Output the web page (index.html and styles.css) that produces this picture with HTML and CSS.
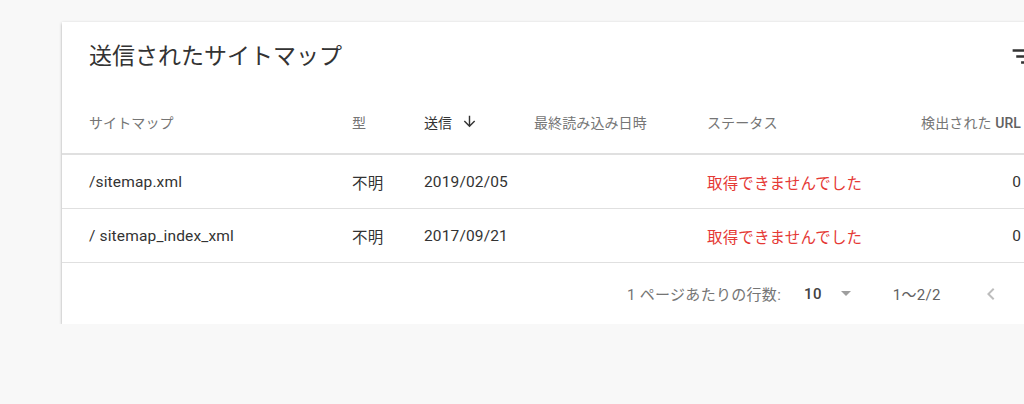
FILE: index.html
```html
<!DOCTYPE html>
<html lang="ja">

<head>
    <meta charset="UTF-8">
    <meta name="viewport" content="width=device-width, initial-scale=1.0">
    <title>送信されたサイトマップ</title>
    <link rel="stylesheet" href="styles.css">
</head>

<body>
    <div class="card">
        <div class="card-header">
            <h2 class="title">送信されたサイトマップ</h2>
            <svg class="filterIcon" viewBox="0 0 24 24"><path d="M10 18h4v-2h-4v2zM3 6v2h18V6H3zm3 7h12v-2H6v2z"/></svg>
        </div>

        <div class="row head">
            <div>サイトマップ</div>
            <div>型</div>
            <div class="sorted">送信
                <svg class="sortIcon" viewBox="0 0 24 24"><path d="M20 12l-1.41-1.41L13 16.17V4h-2v12.17l-5.58-5.59L4 12l8 8 8-8z"/></svg>
            </div>
            <div>最終読み込み日時</div>
            <div>ステータス</div>
            <div class="num">検出された <span class="latin">URL</span></div>
        </div>

        <div class="row">
            <div>/sitemap.xml</div>
            <div>不明</div>
            <div>2019/02/05</div>
            <div></div>
            <div class="error">取得できませんでした</div>
            <div class="num">0</div>
        </div>
        <div class="row">
            <div>/ sitemap_index_xml</div>
            <div>不明</div>
            <div>2017/09/21</div>
            <div></div>
            <div class="error">取得できませんでした</div>
            <div class="num">0</div>
        </div>

        <div class="pager">
            <span class="pageLabel">1 ページあたりの行数:</span>
            <span class="pageSize">10</span>
            <span class="dropArrow"></span>
            <span class="range">1〜2/2</span>
            <svg class="chevron" viewBox="0 0 24 24"><path d="M15.41 7.41L14 6l-6 6 6 6 1.41-1.41L10.83 12z"/></svg>
            <svg class="chevron" viewBox="0 0 24 24"><path d="M10 6L8.59 7.41 13.17 12l-4.58 4.59L10 18l6-6z"/></svg>
        </div>
    </div>
</body>

</html>
```

FILE: styles.css
```css
html {
    overflow: hidden;
}

body {
    font-family: Roboto, "Noto Sans CJK JP", sans-serif;
    margin: 0;
    padding: 22px 0 0 62px;
    background-color: #f8f8f8;
    color: #333;
}

.card {
    width: 1000px;
    background-color: white;
    box-shadow: 0 1px 3px rgba(0, 0, 0, 0.25), 0 2px 2px rgba(0, 0, 0, 0.1);
}

.card-header {
    height: 69px;
    display: flex;
    align-items: center;
    justify-content: space-between;
    padding: 0 24px 0 27px;
}

.title {
    margin: 0;
    font-size: 23px;
    font-weight: 400;
    line-height: 32px;
    color: #333;
}

.filterIcon {
    width: 29px;
    height: 29px;
    fill: #333;
}

.row {
    display: grid;
    grid-template-columns: 263px 72px 110px 173px 160px 1fr;
    align-items: center;
    height: 53px;
    padding: 0 41px 0 27px;
    border-bottom: 1px solid #e0e0e0;
    font-size: 15.5px;
    letter-spacing: 0.15px;
}

.row.head {
    height: 61px;
    padding-bottom: 1px;
    font-size: 14px;
    letter-spacing: 0.1px;
    color: #757575;
    border-bottom-width: 2px;
}

.sorted {
    display: flex;
    align-items: center;
    color: #333;
}

.sortIcon {
    width: 17px;
    height: 17px;
    margin-left: 9px;
    fill: #333;
}

.num {
    text-align: right;
}

.latin {
    font-weight: 500;
    color: #616161;
}

.error {
    color: #e53935;
}

.pager {
    height: 61px;
    display: flex;
    align-items: center;
    padding-left: 565px;
    font-size: 15px;
    letter-spacing: 0.3px;
}

.pageLabel {
    color: #757575;
}

.pageSize {
    margin-left: 23px;
    font-weight: 500;
    color: #424242;
}

.dropArrow {
    margin-left: 19px;
    border-left: 5px solid transparent;
    border-right: 5px solid transparent;
    border-top: 5px solid #9e9e9e;
}

.range {
    margin-left: 42px;
    color: #616161;
}

.chevron {
    width: 24px;
    height: 24px;
    margin-left: 38px;
    fill: #bdbdbd;
}

.chevron + .chevron {
    margin-left: 24px;
}
```
